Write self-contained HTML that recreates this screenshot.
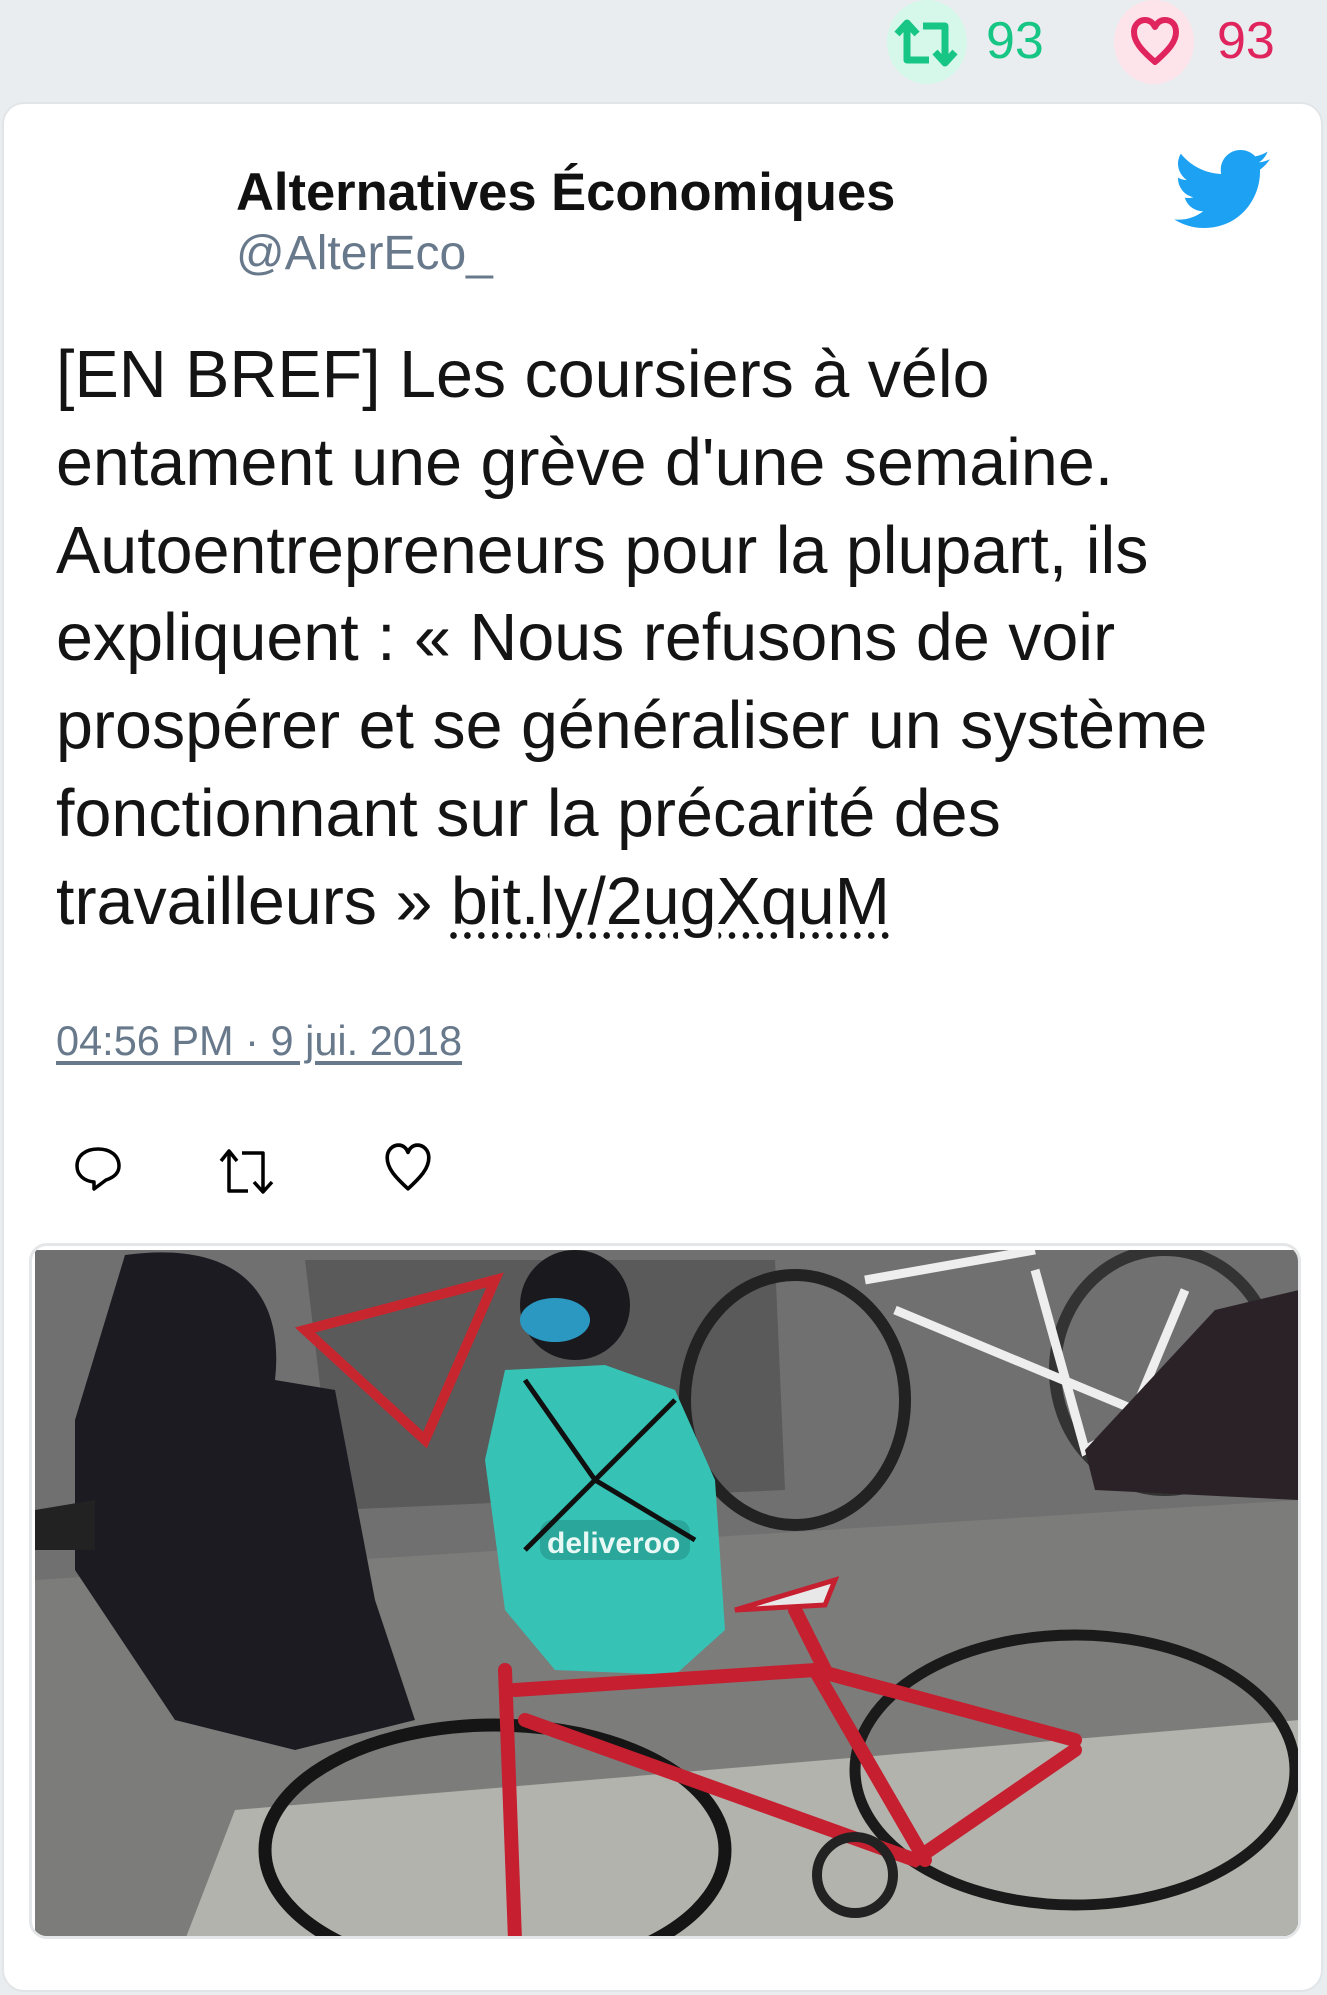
<!DOCTYPE html>
<html><head><meta charset="utf-8"><style>
*{margin:0;padding:0;box-sizing:border-box}
body{width:1327px;height:1995px;background:#e9edf0;font-family:"Liberation Sans",sans-serif;position:relative;overflow:hidden}
.circ{position:absolute;width:80px;height:84px;border-radius:50%}
.num{position:absolute;top:11px;font-size:52px}
.card{position:absolute;left:2px;top:102px;width:1321px;height:1890px;background:#fff;border-radius:22px;border:2px solid #e1e5e8}
.name{position:absolute;left:232px;top:58px;font-size:52.5px;font-weight:bold;color:#111;white-space:nowrap}
.handle{position:absolute;left:232px;top:122px;font-size:48px;color:#68798b}
.text{position:absolute;left:52px;top:228px;font-size:66.4px;line-height:87.8px;color:#141414;white-space:nowrap}
.text a{color:#141414;text-decoration:underline dotted;text-underline-offset:8px}
.time{position:absolute;left:52px;top:913px;font-size:41.5px;color:#68798b;text-decoration:underline;text-underline-offset:6px}
.img{position:absolute;left:25px;top:1139px;width:1272px;height:696px;border:3px solid #e4e6e8;border-radius:18px;overflow:hidden;background:#fff}
</style></head><body>
<div class="circ" style="left:887px;top:0;background:#d5f8ea"></div>
<svg style="position:absolute;left:893px;top:18px" width="68" height="50" viewBox="0 0 68 50"><g fill="none" stroke="#17c685" stroke-width="7" stroke-linejoin="round"><path d="M4 16 L14 5 L24 16 M14 6 V42 H36"/><path d="M30 8 H52 V44 M42 34 L52 45 L62 34"/></g></svg>
<div class="num" style="left:986px;color:#17c685">93</div>
<div class="circ" style="left:1114px;top:0;background:#fde3ea"></div>
<svg style="position:absolute;left:1130px;top:17px" width="50" height="50" viewBox="0 0 50 50"><path d="M25 45 C10 32 4 24 4 15 C4 7 10 3 15 3 C20 3 23 6 25 10 C27 6 30 3 35 3 C41 3 46 7 46 15 C46 24 40 32 25 45 Z" fill="none" stroke="#e0245e" stroke-width="6" stroke-linejoin="round"/></svg>
<div class="num" style="left:1217px;color:#e0245e">93</div>
<div class="card">
<div class="name">Alternatives Économiques</div>
<div class="handle">@AlterEco_</div>
<svg style="position:absolute;left:1170px;top:46px" width="96" height="78" viewBox="0 0 24 19.5"><path fill="#1da1f2" d="M24 2.3c-.9.4-1.8.7-2.8.8 1-.6 1.8-1.6 2.2-2.7-1 .6-2 1-3.1 1.2C19.4.6 18.1 0 16.6 0c-2.7 0-4.9 2.200-4.9 4.9 0 .4 0 .8.1 1.1C7.700 5.800 4.100 3.900 1.700.9c-.4.7-.7 1.600-.7 2.500 0 1.700.9 3.200 2.200 4.100-.8 0-1.600-.2-2.200-.6v.1c0 2.400 1.700 4.400 3.900 4.800-.4.1-.8.2-1.300.2-.3 0-.6 0-.9-.1.6 2 2.400 3.400 4.600 3.400-1.700 1.300-3.800 2.100-6.100 2.100-.4 0-.8 0-1.200-.1 2.200 1.400 4.800 2.200 7.500 2.200 9.100 0 14-7.500 14-14v-.6c1-.7 1.800-1.600 2.500-2.600z"/></svg>
<div class="text">[EN BREF] Les coursiers à vélo<br>entament une grève d'une semaine.<br>Autoentrepreneurs pour la plupart, ils<br>expliquent : « Nous refusons de voir<br>prospérer et se généraliser un système<br>fonctionnant sur la précarité des<br>travailleurs » <a>bit.ly/2ugXquM</a></div>
<div class="time">04:56 PM · 9 jui. 2018</div>
<svg style="position:absolute;left:70px;top:1040px" width="50" height="50" viewBox="0 0 50 50"><path d="M20 45 V38 C10 37 3 31 3 22 C3 12 11 5 24 5 C37 5 45 12 45 22 C45 30 38 34 32 36 Z" fill="none" stroke="#000" stroke-width="3.5" stroke-linejoin="round"/></svg>
<svg style="position:absolute;left:214px;top:1042px" width="64" height="52" viewBox="0 0 64 52"><g fill="none" stroke="#000" stroke-width="3.5" stroke-linejoin="round"><path d="M3 15 L11 5 L19 15 M11 6 V45 H30"/><path d="M24 7 H45 V46 M36 36 L45 46 L54 36"/></g></svg>
<svg style="position:absolute;left:378px;top:1038px" width="52" height="52" viewBox="0 0 50 50"><path d="M25 45 C12 33 5 25 5 15 C5 8 10 3 16 3 C21 3 24 7 25 10 C26 7 29 3 34 3 C40 3 45 8 45 15 C45 25 38 33 25 45 Z" fill="none" stroke="#000" stroke-width="3.5" stroke-linejoin="round"/></svg>
<div class="img">
<svg width="1264" height="690" viewBox="0 0 1264 690" preserveAspectRatio="none" style="position:absolute;left:3px;top:4px">
<rect width="1264" height="690" fill="#707070"/>
<polygon points="0,330 1264,250 1264,690 0,690" fill="#7c7c7a"/>
<polygon points="200,560 1264,470 1264,690 150,690" fill="#b3b3ad"/>
<path d="M270 10 L740 10 L750 240 L300 260 Z" fill="#5a5a5a"/>
<g fill="none" stroke="#c8262f" stroke-width="10"><path d="M270 80 L460 30 L390 190 Z"/></g>
<ellipse cx="760" cy="150" rx="110" ry="125" fill="none" stroke="#222" stroke-width="12"/>
<ellipse cx="1130" cy="120" rx="110" ry="120" fill="none" stroke="#333" stroke-width="12"/>
<g stroke="#eee" stroke-width="9" fill="none"><path d="M830 30 L1000 0 M860 60 L1100 160 L1150 40 M1000 20 L1050 200 L1180 130"/></g>
<path d="M90 5 C200 -10 250 40 240 130 L300 140 L340 350 L380 470 L260 500 L140 470 L40 320 L40 170 Z" fill="#1c1b22"/>
<path d="M0 260 L60 250 L60 300 L0 300 Z" fill="#222"/>
<path d="M1180 60 L1264 40 L1264 250 L1060 240 L1050 200 Z" fill="#2a2226"/>
<circle cx="540" cy="55" r="55" fill="#1a1a1e"/>
<ellipse cx="520" cy="70" rx="35" ry="22" fill="#2b98c2"/>
<path d="M470 120 L570 115 L640 140 L680 230 L690 380 L640 425 L520 420 L470 360 L450 210 Z" fill="#36c3b5"/>
<rect x="505" y="270" width="150" height="40" rx="12" fill="#2aa69a"/>
<text x="512" y="303" font-family="Liberation Sans" font-weight="bold" font-size="30" fill="#e8f8f5">deliveroo</text>
<g stroke="#101010" stroke-width="5" fill="none"><path d="M490 130 L560 230 L640 150 M560 230 L490 300 M560 230 L660 290"/></g>
<ellipse cx="460" cy="600" rx="230" ry="125" fill="none" stroke="#151515" stroke-width="13"/>
<ellipse cx="1040" cy="520" rx="220" ry="135" fill="none" stroke="#1a1a1a" stroke-width="11"/>
<g stroke="#c51f30" stroke-width="14" fill="none" stroke-linecap="round"><path d="M480 440 L780 420 L1040 490 M490 470 L880 610 L1040 500 M780 420 L890 610"/><path d="M760 360 L790 420 M470 420 L480 690"/></g>
<path d="M700 360 L800 330 L790 355 Z" fill="#e8e8e8" stroke="#c51f30" stroke-width="5"/>
<circle cx="820" cy="625" r="38" fill="none" stroke="#222" stroke-width="10"/>
</svg>
</div>
</div>
</body></html>
